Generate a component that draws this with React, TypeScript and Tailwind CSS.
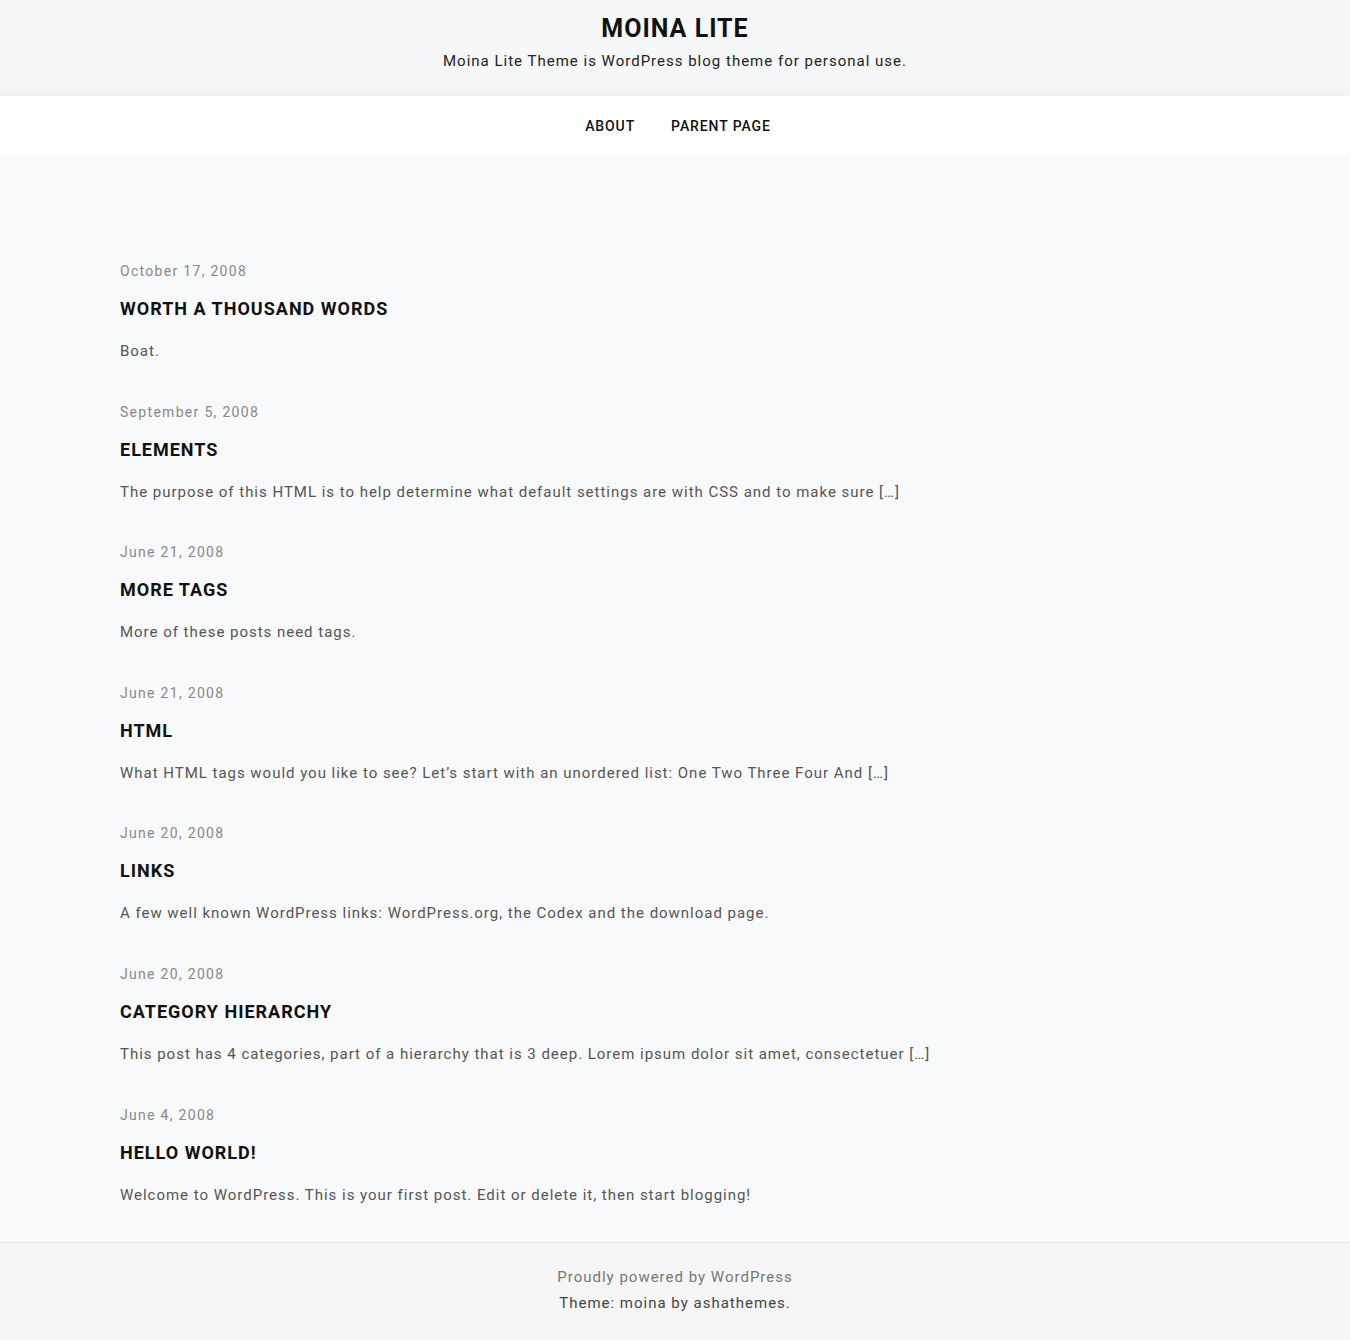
const posts = [
  { date: 'October 17, 2008', title: 'Worth A Thousand Words', excerpt: 'Boat.' },
  {
    date: 'September 5, 2008',
    title: 'Elements',
    excerpt: 'The purpose of this HTML is to help determine what default settings are with CSS and to make sure […]',
  },
  { date: 'June 21, 2008', title: 'More Tags', excerpt: 'More of these posts need tags.' },
  {
    date: 'June 21, 2008',
    title: 'HTML',
    excerpt: 'What HTML tags would you like to see? Let’s start with an unordered list: One Two Three Four And […]',
  },
  {
    date: 'June 20, 2008',
    title: 'Links',
    excerpt: 'A few well known WordPress links: WordPress.org, the Codex and the download page.',
  },
  {
    date: 'June 20, 2008',
    title: 'Category Hierarchy',
    excerpt: 'This post has 4 categories, part of a hierarchy that is 3 deep. Lorem ipsum dolor sit amet, consectetuer […]',
  },
  {
    date: 'June 4, 2008',
    title: 'Hello world!',
    excerpt: 'Welcome to WordPress. This is your first post. Edit or delete it, then start blogging!',
  },
]

function PostItem({ date, title, excerpt }: { date: string; title: string; excerpt: string }) {
  return (
    <article className="flex flex-col">
      <span className="text-[14px] leading-[22px] tracking-[1.3px] text-[#888]">{date}</span>
      <h2 className="mt-[14px] text-[18px] leading-[26px] font-bold uppercase tracking-[1px] text-[#111]">
        {title}
      </h2>
      <p className="mt-[16px] text-[15px] leading-[26px] tracking-[0.98px] text-[#555]">{excerpt}</p>
    </article>
  )
}

export default function App() {
  return (
    <div className="min-h-[1340px] flex flex-col bg-[#f8f9fb] font-['Roboto',sans-serif]">
      <header className="bg-[#f6f7f9] pt-[13px] pb-[23px] flex flex-col items-center">
        <h1 className="text-[25px] leading-[32px] font-bold uppercase tracking-[1px] text-[#111]">Moina Lite</h1>
        <p className="mt-1 text-[15px] leading-[24px] tracking-[1px] text-[#222]">
          Moina Lite Theme is WordPress blog theme for personal use.
        </p>
      </header>
      <nav className="h-[60px] pl-[6px] bg-white shadow-[0_-6px_10px_rgba(0,0,0,0.03)] flex items-center justify-center gap-[36px]">
        <a className="text-[14px] font-medium uppercase tracking-[0.9px] text-[#111]">About</a>
        <a className="text-[14px] font-medium uppercase tracking-[0.9px] text-[#111]">Parent Page</a>
      </nav>
      <main className="flex-1 px-[120px] pt-[104px] pb-[34px] flex flex-col gap-[36.6px]">
        {posts.map((p) => (
          <PostItem key={p.title + p.date} {...p} />
        ))}
      </main>
      <footer className="border-t border-[#e2e4e7] bg-[#f6f6f6] pt-[21px] pb-[25px] flex flex-col items-center text-[15px] leading-[26px] tracking-[1px]">
        <a className="text-[#777]">Proudly powered by WordPress</a>
        <span className="text-[#444]">Theme: moina by ashathemes.</span>
      </footer>
    </div>
  )
}
